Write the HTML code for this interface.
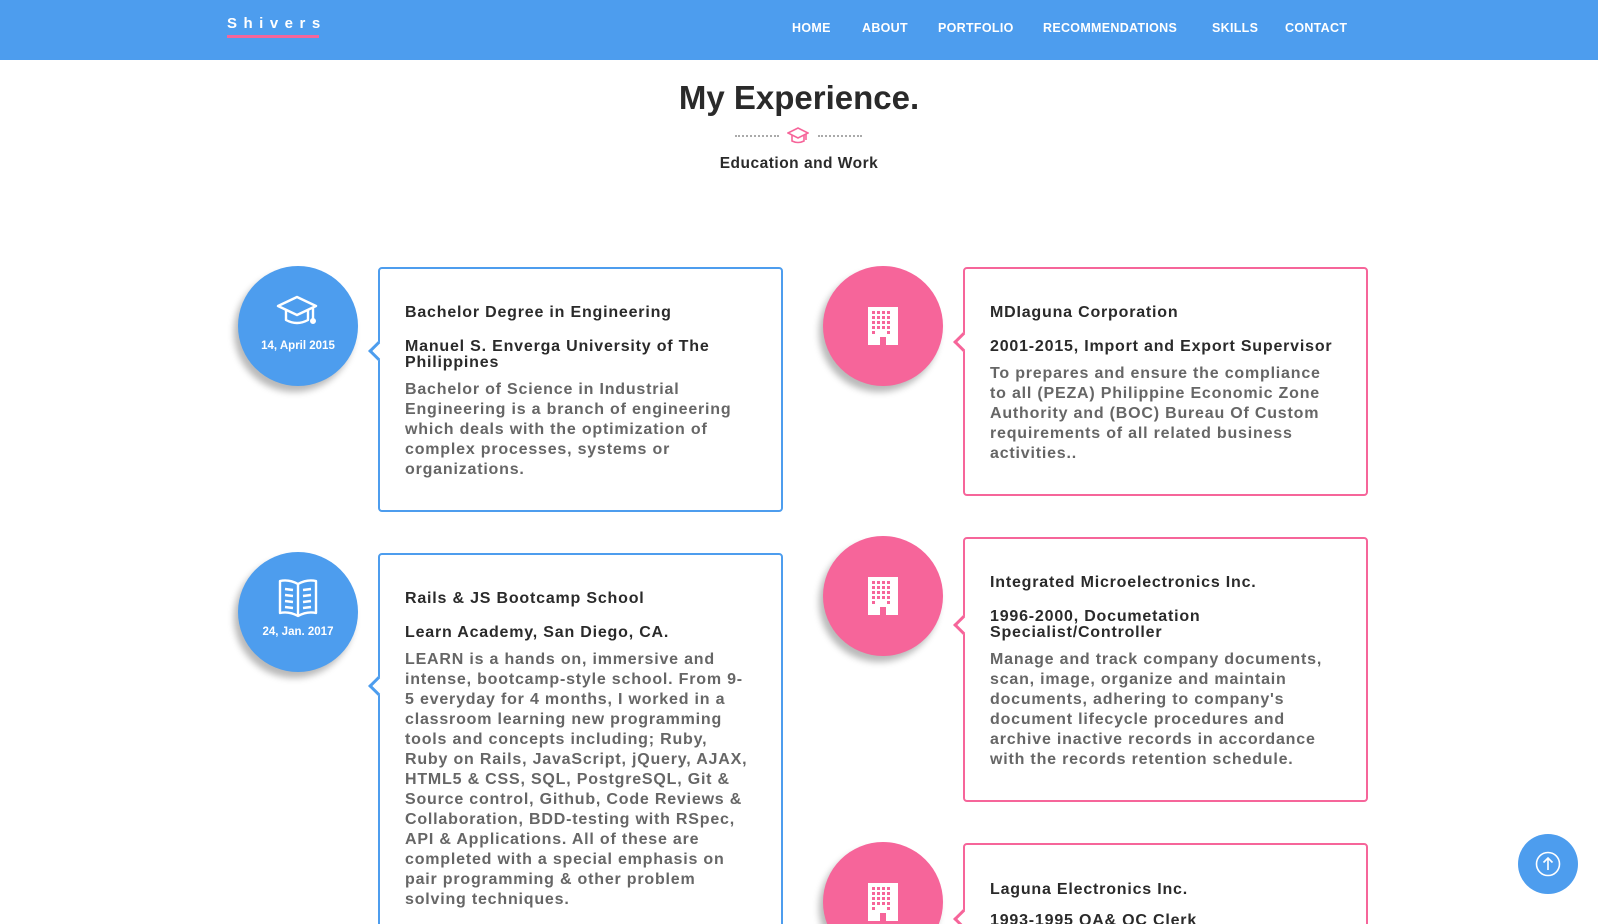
<!DOCTYPE html>
<html><head><meta charset="utf-8"><style>
*{margin:0;padding:0;box-sizing:border-box}
html,body{width:1598px;height:924px;overflow:hidden}
body{background:#fff;font-family:"Liberation Sans",Arial,sans-serif;position:relative}
#w{position:absolute;left:0;top:0;width:1598px;height:924px;overflow:hidden}
.nav{position:absolute;left:0;top:0;width:1598px;height:60px;background:#4d9dee}
.logo{position:absolute;left:227px;top:15px;color:#fff;font-weight:bold;font-size:15px;letter-spacing:6.5px}
.logo:after{content:"";position:absolute;left:0;top:20px;width:92px;height:3px;background:#f6659a}
.menu a{position:absolute;top:21px;color:#fff;font-weight:bold;font-size:12.5px;text-decoration:none;letter-spacing:.3px}
h1{position:absolute;left:0;width:1598px;text-align:center;top:79px;font-size:33px;color:#2a2a2a;font-weight:bold}
.sub{position:absolute;left:0;width:1598px;text-align:center;top:155px;font-size:15.5px;color:#2a2a2a;font-weight:bold;letter-spacing:.5px}
.dots{position:absolute;top:135px;height:2px;border-top:2px dotted #aaa}
.circ{position:absolute;width:120px;height:120px;border-radius:50%;box-shadow:-4px 6px 7px rgba(0,0,0,.28)}
.b{background:#4d9dee}.p{background:#f6659a}
.circ svg{position:absolute}
.date{position:absolute;left:0;width:120px;text-align:center;top:74px;color:#fff;font-weight:bold;font-size:11.5px}
.card{position:absolute;width:405px;border:2px solid;border-radius:4px;background:#fff}
.cb{border-color:#4d9dee}.cp{border-color:#f6659a}
.arr{position:absolute;width:14px;height:14px;background:#fff;transform:rotate(45deg);border-left:3px solid;border-bottom:3px solid}
.t{position:absolute;font-weight:bold;color:#2a2a2a;font-size:16px;line-height:16px;white-space:nowrap;letter-spacing:.8px}
.d{position:absolute;font-weight:bold;color:#666;font-size:16px;line-height:20px;white-space:nowrap;letter-spacing:.8px}
.up{position:absolute;left:1518px;top:834px;width:60px;height:60px;border-radius:50%;background:#4d9dee}
</style></head><body><div id="w">
<div class="nav"><div class="logo">Shivers</div>
<div class="menu"><a style="left:792px">HOME</a><a style="left:862px">ABOUT</a><a style="left:938px">PORTFOLIO</a><a style="left:1043px">RECOMMENDATIONS</a><a style="left:1212px">SKILLS</a><a style="left:1285px">CONTACT</a></div></div>
<h1>My Experience.</h1>
<div class="dots" style="left:735px;width:44px"></div><div class="dots" style="left:818px;width:44px"></div>
<svg style="position:absolute;left:787px;top:127px" width="22" height="18" viewBox="0 0 22 18" fill="none" stroke="#f6659a" stroke-width="1.6"><path d="M1 6 11 1 21 6 11 11Z"/><path d="M5 8v6q6 3 12 0V8"/><path d="M19 7v6"/></svg>
<div class="sub">Education and Work</div>

<div class="circ b" style="left:238px;top:266px"><svg style="left:38px;top:29px" width="44" height="34" viewBox="0 0 44 34" fill="none" stroke="#fff" stroke-width="2.4" stroke-linejoin="round"><path d="M2 11 21 2 40 11 21 20Z"/><path d="M10 15v10q11 6 22 0V15"/><path d="M37 13v11"/><circle cx="37" cy="26" r="1.8" fill="#fff"/></svg><div class="date">14, April 2015</div></div>
<div class="card cb" style="left:378px;top:267px;height:245px"><div class="arr" style="border-color:#4d9dee;left:-9px;top:75px"></div></div>
<div class="t" style="left:405px;top:305px">Bachelor Degree in Engineering</div>
<div class="t" style="left:405px;top:339px">Manuel S. Enverga University of The<br>Philippines</div>
<div class="d" style="left:405px;top:380px">Bachelor of Science in Industrial<br>Engineering is a branch of engineering<br>which deals with the optimization of<br>complex processes, systems or<br>organizations.</div>

<div class="circ b" style="left:238px;top:552px"><svg style="left:38px;top:26px" width="44" height="40" viewBox="0 0 44 40" fill="none" stroke="#fff" stroke-width="2.4" stroke-linejoin="round"><path d="M4 3q9-2 18 3q9-5 18-3v32q-9-2-18 3q-9-5-18-3Z"/><path d="M22 6v32"/><path d="M9 11l8 1M9 17l8 1M9 23l8 1M9 29l8 1M27 12l8-1M27 18l8-1M27 24l8-1M27 30l8-1"/></svg><div class="date">24, Jan. 2017</div></div>
<div class="card cb" style="left:378px;top:553px;height:420px"><div class="arr" style="border-color:#4d9dee;left:-9px;top:124px"></div></div>
<div class="t" style="left:405px;top:591px">Rails &amp; JS Bootcamp School</div>
<div class="t" style="left:405px;top:625px">Learn Academy, San Diego, CA.</div>
<div class="d" style="left:405px;top:650px">LEARN is a hands on, immersive and<br>intense, bootcamp-style school. From 9-<br>5 everyday for 4 months, I worked in a<br>classroom learning new programming<br>tools and concepts including; Ruby,<br>Ruby on Rails, JavaScript, jQuery, AJAX,<br>HTML5 &amp; CSS, SQL, PostgreSQL, Git &amp;<br>Source control, Github, Code Reviews &amp;<br>Collaboration, BDD-testing with RSpec,<br>API &amp; Applications. All of these are<br>completed with a special emphasis on<br>pair programming &amp; other problem<br>solving techniques.</div>

<div class="circ p" style="left:823px;top:266px"><svg style="left:44px;top:40px" width="32" height="40" viewBox="0 0 32 40" fill="#fff"><path d="M1 1h30v38H19v-8h-6v8H1Z M5 5v3h3V5Z M10 5v3h3V5Z M15 5v3h3V5Z M20 5v3h3V5Z M5 10v3h3v-3Z M10 10v3h3v-3Z M15 10v3h3v-3Z M20 10v3h3v-3Z M5 15v3h3v-3Z M10 15v3h3v-3Z M15 15v3h3v-3Z M20 15v3h3v-3Z M5 20v3h3v-3Z M10 20v3h3v-3Z M15 20v3h3v-3Z M20 20v3h3v-3Z M5 25v3h3v-3Z M20 25v3h3v-3Z" fill-rule="evenodd"/></svg></div>
<div class="card cp" style="left:963px;top:267px;height:229px"><div class="arr" style="border-color:#f6659a;left:-9px;top:66px"></div></div>
<div class="t" style="left:990px;top:305px">MDIaguna Corporation</div>
<div class="t" style="left:990px;top:339px">2001-2015, Import and Export Supervisor</div>
<div class="d" style="left:990px;top:364px">To prepares and ensure the compliance<br>to all (PEZA) Philippine Economic Zone<br>Authority and (BOC) Bureau Of Custom<br>requirements of all related business<br>activities..</div>

<div class="circ p" style="left:823px;top:536px"><svg style="left:44px;top:40px" width="32" height="40" viewBox="0 0 32 40" fill="#fff"><path d="M1 1h30v38H19v-8h-6v8H1Z M5 5v3h3V5Z M10 5v3h3V5Z M15 5v3h3V5Z M20 5v3h3V5Z M5 10v3h3v-3Z M10 10v3h3v-3Z M15 10v3h3v-3Z M20 10v3h3v-3Z M5 15v3h3v-3Z M10 15v3h3v-3Z M15 15v3h3v-3Z M20 15v3h3v-3Z M5 20v3h3v-3Z M10 20v3h3v-3Z M15 20v3h3v-3Z M20 20v3h3v-3Z M5 25v3h3v-3Z M20 25v3h3v-3Z" fill-rule="evenodd"/></svg></div>
<div class="card cp" style="left:963px;top:537px;height:265px"><div class="arr" style="border-color:#f6659a;left:-9px;top:79px"></div></div>
<div class="t" style="left:990px;top:575px">Integrated Microelectronics Inc.</div>
<div class="t" style="left:990px;top:609px">1996-2000, Documetation<br>Specialist/Controller</div>
<div class="d" style="left:990px;top:650px">Manage and track company documents,<br>scan, image, organize and maintain<br>documents, adhering to company's<br>document lifecycle procedures and<br>archive inactive records in accordance<br>with the records retention schedule.</div>

<div class="circ p" style="left:823px;top:842px"><svg style="left:44px;top:40px" width="32" height="40" viewBox="0 0 32 40" fill="#fff"><path d="M1 1h30v38H19v-8h-6v8H1Z M5 5v3h3V5Z M10 5v3h3V5Z M15 5v3h3V5Z M20 5v3h3V5Z M5 10v3h3v-3Z M10 10v3h3v-3Z M15 10v3h3v-3Z M20 10v3h3v-3Z M5 15v3h3v-3Z M10 15v3h3v-3Z M15 15v3h3v-3Z M20 15v3h3v-3Z M5 20v3h3v-3Z M10 20v3h3v-3Z M15 20v3h3v-3Z M20 20v3h3v-3Z M5 25v3h3v-3Z M20 25v3h3v-3Z" fill-rule="evenodd"/></svg></div>
<div class="card cp" style="left:963px;top:843px;height:200px"><div class="arr" style="border-color:#f6659a;left:-9px;top:67px"></div></div>
<div class="t" style="left:990px;top:882px">Laguna Electronics Inc.</div>
<div class="t" style="left:990px;top:913px">1993-1995 QA&amp; QC Clerk</div>

<div class="up"><svg style="position:absolute;left:17px;top:17px" width="26" height="26" viewBox="0 0 26 26" fill="none" stroke="#fff" stroke-width="1.6"><circle cx="13" cy="13" r="11.5"/><path d="M13 19V7M8.5 11.5 13 7l4.5 4.5"/></svg></div>
</div></body></html>
